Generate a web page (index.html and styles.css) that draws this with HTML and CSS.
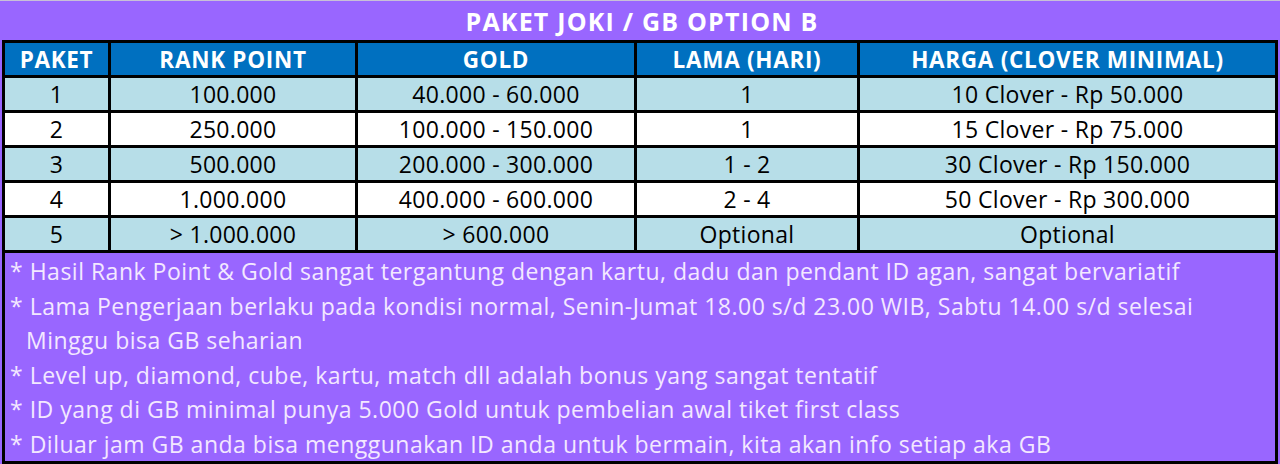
FILE: index.html
```html
<!DOCTYPE html>
<html>
<head>
<meta charset="utf-8">
<link rel="stylesheet" href="styles.css">
</head>
<body>
<div class="sheet">
  <div class="title">PAKET JOKI / GB OPTION B</div>
  <div class="grid">
    <div class="cell head">PAKET</div>
    <div class="cell head">RANK POINT</div>
    <div class="cell head">GOLD</div>
    <div class="cell head">LAMA (HARI)</div>
    <div class="cell head">HARGA (CLOVER MINIMAL)</div>

    <div class="cell blue">1</div>
    <div class="cell blue">100.000</div>
    <div class="cell blue">40.000 - 60.000</div>
    <div class="cell blue">1</div>
    <div class="cell blue">10 Clover - Rp 50.000</div>

    <div class="cell white">2</div>
    <div class="cell white">250.000</div>
    <div class="cell white">100.000 - 150.000</div>
    <div class="cell white">1</div>
    <div class="cell white">15 Clover - Rp 75.000</div>

    <div class="cell blue">3</div>
    <div class="cell blue">500.000</div>
    <div class="cell blue">200.000 - 300.000</div>
    <div class="cell blue">1 - 2</div>
    <div class="cell blue">30 Clover - Rp 150.000</div>

    <div class="cell white">4</div>
    <div class="cell white">1.000.000</div>
    <div class="cell white">400.000 - 600.000</div>
    <div class="cell white">2 - 4</div>
    <div class="cell white">50 Clover - Rp 300.000</div>

    <div class="cell blue">5</div>
    <div class="cell blue">&gt; 1.000.000</div>
    <div class="cell blue">&gt; 600.000</div>
    <div class="cell blue">Optional</div>
    <div class="cell blue">Optional</div>

    <div class="notes">
      <div class="note">* Hasil Rank Point &amp; Gold sangat tergantung dengan kartu, dadu dan pendant ID agan, sangat bervariatif</div>
      <div class="note">* Lama Pengerjaan berlaku pada kondisi normal, Senin-Jumat 18.00 s/d 23.00 WIB, Sabtu 14.00 s/d selesai</div>
      <div class="note indent">Minggu bisa GB seharian</div>
      <div class="note">* Level up, diamond, cube, kartu, match dll adalah bonus yang sangat tentatif</div>
      <div class="note">* ID yang di GB minimal punya 5.000 Gold untuk pembelian awal tiket first class</div>
      <div class="note">* Diluar jam GB anda bisa menggunakan ID anda untuk bermain, kita akan info setiap aka GB</div>
    </div>
  </div>
</div>
</body>
</html>
```

FILE: styles.css
```css
html, body {
  margin: 0;
  padding: 0;
  background: #ffffff;
}
body {
  width: 1280px;
  height: 464px;
  overflow: hidden;
  font-family: "Open Sans", Lato, sans-serif;
}
.sheet {
  width: 1280px;
  height: 464px;
  background: #9966ff;
  border-top: 1px solid #c8c0d8;
  box-sizing: border-box;
}
.title {
  height: 39px;
  display: flex;
  align-items: center;
  justify-content: center;
  color: #ffffff;
  font-weight: 700;
  font-size: 25px;
  letter-spacing: 1.2px;
  padding-left: 4px;
}
.grid {
  margin-left: 2px;
  width: 1276px;
  box-sizing: border-box;
  background: #000000;
  padding: 3px;
  display: grid;
  grid-template-columns: 103px 244px 276px 220px 415px;
  grid-template-rows: 32px repeat(5, 32px) 208px;
  gap: 3px;
}
.cell {
  display: flex;
  align-items: center;
  justify-content: center;
  font-size: 23px;
  letter-spacing: 0.3px;
  color: #000000;
  white-space: nowrap;
}
.head {
  background: #0070c0;
  color: #ffffff;
  font-weight: 700;
  font-size: 22.5px;
  letter-spacing: 0.7px;
}
.blue {
  background: #b7dee8;
}
.white {
  background: #ffffff;
}
.notes {
  grid-column: 1 / -1;
  background: #9966ff;
  color: #f3e8ff;
  font-size: 23px;
  letter-spacing: 0.5px;
  padding: 1px 0 0 5px;
}
.note {
  height: 34.5px;
  line-height: 34.5px;
  white-space: nowrap;
}
.indent {
  padding-left: 16px;
}
```
